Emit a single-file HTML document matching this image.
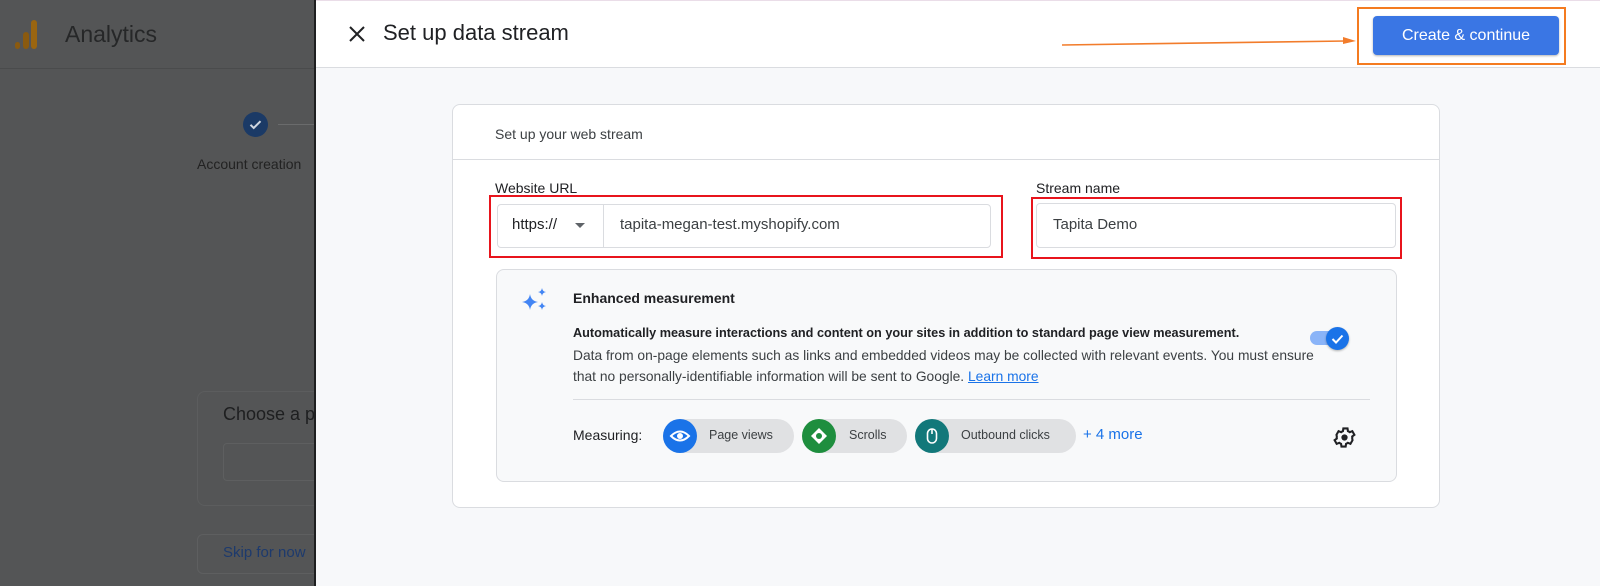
<!DOCTYPE html>
<html><head><style>
*{box-sizing:border-box;margin:0;padding:0}
body{width:1600px;height:586px;overflow:hidden;font-family:"Liberation Sans",Arial,sans-serif;background:#545556;position:relative;color:#202124}
.a{position:absolute}
</style></head><body>
<div class="a" style="left:0;top:0;width:315px;height:586px;background:#545556"></div>
<div class="a" style="left:0;top:68px;width:315px;height:1px;background:#4a4b4c"></div>
<svg class="a" style="left:14px;top:18px" width="24" height="34"><rect x="1" y="24" width="5" height="7" rx="2.5" fill="#8a5a10"/><rect x="9" y="14" width="6" height="17" rx="3" fill="#8a5a10"/><rect x="17" y="2" width="6" height="29" rx="3" fill="#9a6510"/></svg>
<div class="a" style="left:65px;top:21px;font-size:23px;color:#262728">Analytics</div>
<div class="a" style="left:243px;top:112px;width:25px;height:25px;border-radius:50%;background:#1b3a66"></div>
<svg class="a" style="left:243px;top:112px" width="25" height="25"><path d="M7.5 12.8l3.2 3.2 6.8-6.8" stroke="#cfd6e0" stroke-width="2" fill="none"/></svg>
<div class="a" style="left:278px;top:124px;width:37px;height:1px;background:#6a6b6c"></div>
<div class="a" style="left:197px;top:156px;font-size:14px;color:#222">Account creation</div>
<div class="a" style="left:197px;top:391px;width:140px;height:115px;border:1px solid #5c5d5e;border-radius:8px"></div>
<div class="a" style="left:223px;top:404px;font-size:18px;color:#1e1f20">Choose a pl</div>
<div class="a" style="left:223px;top:443px;width:110px;height:38px;border:1px solid #5e5f60;border-radius:4px"></div>
<div class="a" style="left:197px;top:534px;width:140px;height:40px;border:1px solid #5e5f60;border-radius:6px"></div>
<div class="a" style="left:223px;top:544px;font-size:15px;color:#1d3a6d">Skip for now</div>

<div class="a" style="left:314px;top:0;width:2px;height:586px;background:#1e1f20"></div>
<div class="a" style="left:316px;top:0;width:1284px;height:586px;background:#f7f8fa"></div>
<div class="a" style="left:316px;top:0;width:1284px;height:68px;background:#fff;border-bottom:1px solid #dadce0;border-top:1px solid #eadde8"></div>
<svg class="a" style="left:348px;top:25px" width="18" height="18"><path d="M2 2L16 16M16 2L2 16" stroke="#202124" stroke-width="2"/></svg>
<div class="a" style="left:383px;top:20px;font-size:22px;color:#202124">Set up data stream</div>
<svg class="a" style="left:1060px;top:34px" width="300" height="14"><path d="M2 11L286 7" stroke="#f27c2b" stroke-width="1.6"/><path d="M283 3L296 7L283 10Z" fill="#f27c2b"/></svg>
<div class="a" style="left:1357px;top:7px;width:209px;height:58px;border:2px solid #f47b20"></div>
<div class="a" style="left:1373px;top:16px;width:186px;height:39px;background:#3a76e4;border-radius:4px;box-shadow:0 1px 2px rgba(0,0,0,.3);color:#fff;font-size:16px;line-height:39px;text-align:center">Create &amp; continue</div>

<div class="a" style="left:452px;top:104px;width:988px;height:404px;background:#fff;border:1px solid #dadce0;border-radius:8px"></div>
<div class="a" style="left:453px;top:159px;width:986px;height:1px;background:#dadce0"></div>
<div class="a" style="left:495px;top:126px;font-size:14px;color:#3c4043">Set up your web stream</div>
<div class="a" style="left:495px;top:180px;font-size:14px;color:#202124">Website URL</div>
<div class="a" style="left:489px;top:195px;width:514px;height:63px;border:2px solid #e8141c"></div>
<div class="a" style="left:497px;top:204px;width:107px;height:44px;border:1px solid #dadce0;border-radius:4px 0 0 4px"></div>
<div class="a" style="left:512px;top:216px;font-size:15px;color:#202124">https://</div>
<svg class="a" style="left:574px;top:222px" width="12" height="8"><path d="M1 1L6 6L11 1Z" fill="#5f6368"/></svg>
<div class="a" style="left:603px;top:204px;width:388px;height:44px;border:1px solid #dadce0;border-radius:0 4px 4px 0"></div>
<div class="a" style="left:620px;top:216px;font-size:15px;color:#3c4043">tapita-megan-test.myshopify.com</div>
<div class="a" style="left:1036px;top:180px;font-size:14px;color:#202124">Stream name</div>
<div class="a" style="left:1031px;top:197px;width:371px;height:62px;border:2px solid #e8141c"></div>
<div class="a" style="left:1036px;top:203px;width:360px;height:45px;border:1px solid #dadce0;border-radius:4px"></div>
<div class="a" style="left:1053px;top:216px;font-size:15px;color:#3c4043">Tapita Demo</div>

<div class="a" style="left:496px;top:269px;width:901px;height:213px;background:#f8f9fa;border:1px solid #dadce0;border-radius:8px"></div>
<svg class="a" style="left:520px;top:288px" width="28" height="26"><path d="M10 6Q11 13 18 14Q11 15 10 22Q9 15 2 14Q9 13 10 6Z" fill="#4285f4"/><path d="M22 0Q22.5 3.5 26 4Q22.5 4.5 22 8Q21.5 4.5 18 4Q21.5 3.5 22 0Z" fill="#4285f4"/><path d="M22 14Q22.5 17.5 26 18Q22.5 18.5 22 22Q21.5 18.5 18 18Q21.5 17.5 22 14Z" fill="#4285f4"/></svg>
<div class="a" style="left:573px;top:290px;font-size:14px;font-weight:bold;color:#202124">Enhanced measurement</div>
<div class="a" style="left:573px;top:326px;font-size:12.7px;font-weight:bold;color:#202124">Automatically measure interactions and content on your sites in addition to standard page view measurement.</div>
<div class="a" style="left:573px;top:345px;font-size:13.8px;line-height:21px;color:#3c4043;width:780px">Data from on-page elements such as links and embedded videos may be collected with relevant events. You must ensure<br>that no personally-identifiable information will be sent to Google. <span style="color:#1a73e8;text-decoration:underline">Learn more</span></div>
<div class="a" style="left:1310px;top:331px;width:34px;height:14px;border-radius:7px;background:#8ab4f8"></div>
<div class="a" style="left:1326px;top:327px;width:23px;height:23px;border-radius:50%;background:#1a73e8;box-shadow:0 1px 2px rgba(0,0,0,.3)"></div>
<svg class="a" style="left:1326px;top:327px" width="23" height="23"><path d="M6.5 12l3.5 3.5 6.5-7" stroke="#fff" stroke-width="2" fill="none"/></svg>
<div class="a" style="left:573px;top:399px;width:797px;height:1px;background:#dadce0"></div>
<div class="a" style="left:573px;top:427px;font-size:14px;color:#202124">Measuring:</div>
<div class="a" style="left:663px;top:419px;width:131px;height:34px;border-radius:17px;background:#e0e1e3"></div>
<div class="a" style="left:663px;top:419px;width:34px;height:34px;border-radius:50%;background:#1a73e8"></div>
<svg class="a" style="left:663px;top:419px" width="34" height="34"><path d="M8 17Q17 8 26 17Q17 26 8 17Z" fill="none" stroke="#fff" stroke-width="2"/><circle cx="17" cy="17" r="3" fill="#fff"/></svg>
<div class="a" style="left:709px;top:428px;font-size:12.5px;color:#3c4043">Page views</div>
<div class="a" style="left:802px;top:419px;width:105px;height:34px;border-radius:17px;background:#e0e1e3"></div>
<div class="a" style="left:802px;top:419px;width:34px;height:34px;border-radius:50%;background:#1e8e3e"></div>
<svg class="a" style="left:802px;top:419px" width="34" height="34"><path d="M17 9L25 17L17 25L9 17Z" fill="#fff"/><circle cx="17" cy="17" r="3" fill="#1e8e3e"/></svg>
<div class="a" style="left:849px;top:428px;font-size:12.5px;color:#3c4043">Scrolls</div>
<div class="a" style="left:915px;top:419px;width:161px;height:34px;border-radius:17px;background:#e0e1e3"></div>
<div class="a" style="left:915px;top:419px;width:34px;height:34px;border-radius:50%;background:#12787a"></div>
<svg class="a" style="left:915px;top:419px" width="34" height="34"><rect x="12.5" y="10" width="9" height="14" rx="4.5" fill="none" stroke="#fff" stroke-width="1.6"/><path d="M17 10v5" stroke="#fff" stroke-width="1.6"/></svg>
<div class="a" style="left:961px;top:428px;font-size:12.5px;color:#3c4043">Outbound clicks</div>
<div class="a" style="left:1083px;top:426px;font-size:15px;color:#1a73e8">+ 4 more</div>
<svg class="a" style="left:1332px;top:425px" width="25" height="25" viewBox="0 0 24 24"><path d="M19.4 13a7.5 7.5 0 000-2l2.1-1.6-2-3.5-2.5 1a7 7 0 00-1.7-1l-.4-2.6h-4l-.4 2.6a7 7 0 00-1.7 1l-2.5-1-2 3.5L4.6 11a7.5 7.5 0 000 2l-2.1 1.6 2 3.5 2.5-1a7 7 0 001.7 1l.4 2.6h4l.4-2.6a7 7 0 001.7-1l2.5 1 2-3.5z" fill="none" stroke="#202124" stroke-width="2"/><circle cx="12" cy="12" r="3" fill="#202124"/></svg>
</body></html>
